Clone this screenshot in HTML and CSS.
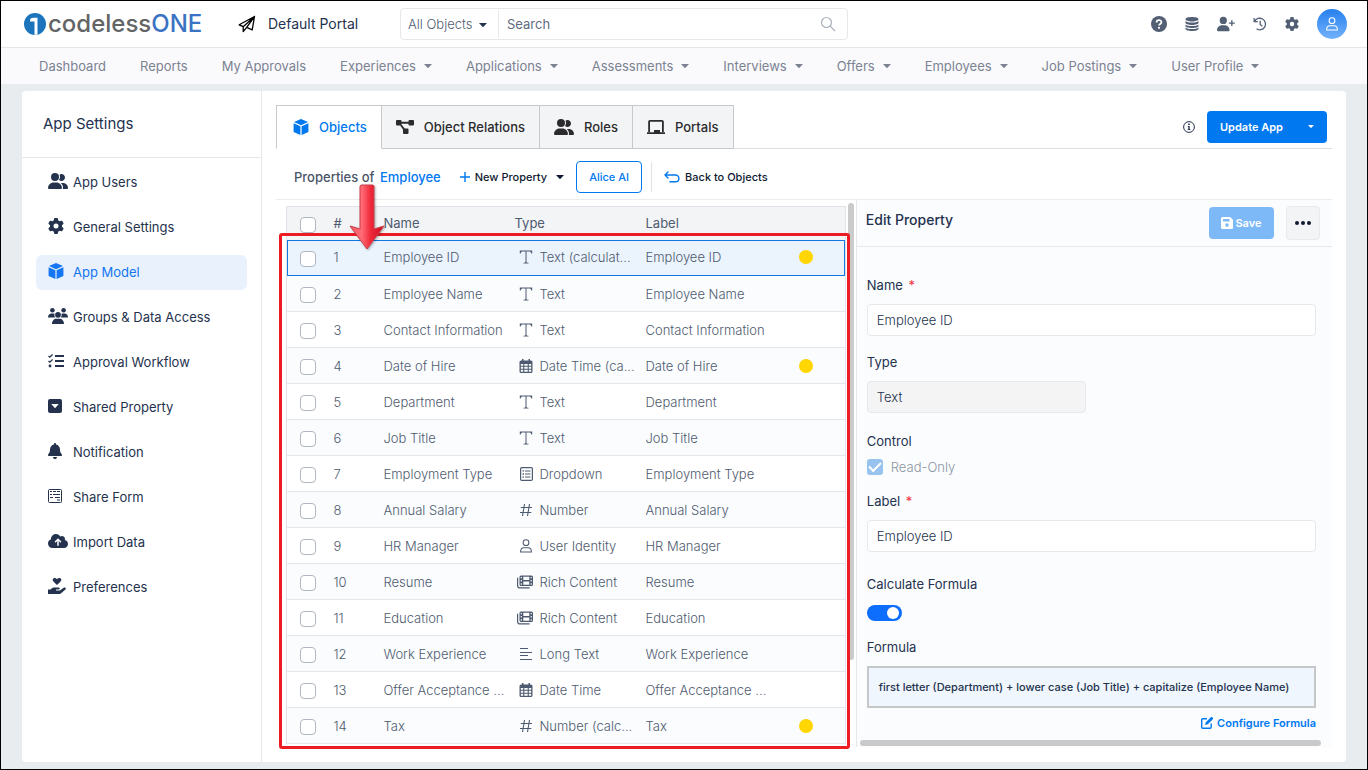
FILE: index.html
```html
<!DOCTYPE html>
<html lang="en">
<head>
    <meta charset="UTF-8">
    <meta name="viewport" content="width=device-width, initial-scale=1.0">
    <title>App Settings - codelessONE</title>
    <link rel="stylesheet" href="styles.css">
</head>
<body>
    <!-- Icon set -->
    <svg class="sprite" aria-hidden="true">
        <symbol id="i-users" viewBox="0 0 640 512"><path d="M96 128a128 128 0 1 1 256 0A128 128 0 1 1 96 128zM0 482.3C0 383.8 79.8 304 178.3 304h91.4C368.2 304 448 383.8 448 482.3c0 16.4-13.3 29.7-29.7 29.7H29.7C13.3 512 0 498.7 0 482.3zM609.3 512H471.4c5.4-9.4 8.6-20.3 8.6-32v-8c0-60.7-27.1-115.2-69.8-151.8c2.4-.1 4.7-.2 7.1-.2h61.4C567.8 320 640 392.2 640 481.3c0 17-13.8 30.7-30.7 30.7zM432 256c-31 0-59-12.6-79.3-32.9C372.4 196.5 384 163.6 384 128c0-26.8-6.6-52.1-18.3-74.3C384.3 40.1 407.2 32 432 32c61.9 0 112 50.1 112 112s-50.1 112-112 112z"/></symbol>
        <symbol id="i-gear" viewBox="0 0 512 512"><path d="M495.9 166.6c3.2 8.7 .5 18.4-6.4 24.6l-43.3 39.4c1.1 8.3 1.7 16.8 1.7 25.4s-.6 17.1-1.7 25.4l43.3 39.4c6.9 6.2 9.6 15.9 6.4 24.6c-4.4 11.9-9.7 23.3-15.8 34.3l-4.7 8.1c-6.6 11-14 21.4-22.1 31.2c-5.9 7.2-15.7 9.6-24.5 6.8l-55.7-17.7c-13.4 10.3-28.2 18.9-44 25.4l-12.5 57.1c-2 9.1-9 16.3-18.2 17.8c-13.8 2.3-28 3.5-42.5 3.5s-28.7-1.2-42.5-3.5c-9.2-1.5-16.2-8.7-18.2-17.8l-12.5-57.1c-15.8-6.5-30.6-15.1-44-25.4L83.1 425.9c-8.8 2.8-18.6 .3-24.5-6.8c-8.1-9.8-15.5-20.2-22.1-31.2l-4.7-8.1c-6.1-11-11.4-22.4-15.8-34.3c-3.2-8.7-.5-18.4 6.4-24.6l43.3-39.4C64.6 273.1 64 264.6 64 256s.6-17.1 1.7-25.4L22.4 191.2c-6.9-6.2-9.6-15.9-6.4-24.6c4.4-11.9 9.7-23.3 15.8-34.3l4.7-8.1c6.6-11 14-21.4 22.1-31.2c5.9-7.2 15.7-9.6 24.5-6.8l55.7 17.7c13.4-10.3 28.2-18.9 44-25.4l12.5-57.1c2-9.1 9-16.3 18.2-17.8C227.3 1.2 241.5 0 256 0s28.7 1.2 42.5 3.5c9.2 1.5 16.2 8.7 18.2 17.8l12.5 57.1c15.8 6.5 30.6 15.1 44 25.4l55.7-17.7c8.8-2.8 18.6-.3 24.5 6.8c8.1 9.8 15.5 20.2 22.1 31.2l4.7 8.1c6.1 11 11.4 22.4 15.8 34.3zM256 336a80 80 0 1 0 0-160 80 80 0 1 0 0 160z"/></symbol>
        <symbol id="i-cube" viewBox="0 0 16 16"><path d="M8 0 15 3 8 6.2 1 3zM.6 4.2l6.8 3V16L.6 13zM15.4 4.2l-6.8 3V16l6.8-3z"/></symbol>
        <symbol id="i-groups" viewBox="0 0 20 16"><circle cx="4.4" cy="2.3" r="2.3"/><circle cx="15.6" cy="2.3" r="2.3"/><circle cx="10" cy="6.8" r="2.9"/><path d="M0 9.3C0 7 1.6 5.5 3.6 5.5h1.6c.5 0 1 .1 1.4.3C6 7.3 6.5 8.6 7.3 9.500H.2zM20 9.300c0-2.300-1.600-3.800-3.600-3.800h-1.600c-.5 0-1 .1-1.400.3.600 1.500.1 2.800-.7 3.700h7.100zM4 16c0-3.200 2-5.200 4.500-5.200h3c2.500 0 4.500 2 4.500 5.200z"/></symbol>
        <symbol id="i-checklist" viewBox="0 0 16 16"><path fill="none" stroke="currentColor" stroke-width="1.300" d="M.5 3l1.300 1.200L4.600 1.500M.5 8l1.300 1.200 2.800-2.700"/><path d="M7 2h9v2H7zM7 7h9v2H7zM7 12h9v2H7z"/><circle cx="2" cy="13" r="1.400"/></symbol>
        <symbol id="i-caret-square" viewBox="0 0 14 14"><path fill-rule="evenodd" d="M2 0h10a2 2 0 0 1 2 2v10a2 2 0 0 1-2 2H2a2 2 0 0 1-2-2V2a2 2 0 0 1 2-2zM3.200 5 7 9.300 10.800 5z"/></symbol>
        <symbol id="i-bell" viewBox="0 0 448 512"><path d="M224 0c-17.7 0-32 14.3-32 32V51.2C119 66 64 130.6 64 208v18.8c0 47-17.3 92.4-48.5 127.6l-7.4 8.3c-8.4 9.4-10.4 22.9-5.3 34.4S19.4 416 32 416H416c12.6 0 24-7.4 29.2-18.9s3.1-25-5.3-34.4l-7.4-8.3C401.3 319.2 384 273.900 384 226.800V208c0-77.400-55-142-128-156.800V32c0-17.700-14.300-32-32-32zm45.300 493.300c12-12 18.700-28.300 18.700-45.300H160c0 17 6.700 33.300 18.700 45.300s28.300 18.700 45.300 18.700s33.300-6.700 45.300-18.700z"/></symbol>
        <symbol id="i-form" viewBox="0 0 14 14"><g fill="none" stroke="currentColor"><rect x=".5" y=".5" width="13" height="13" rx="1"/><path d="M2 2.500h2m1 0h3m1 0h3M2 5.500h2m1 0h7M2 8.500h3m2 0h5M9 11h3"/></g></symbol>
        <symbol id="i-cloud" viewBox="0 0 640 512"><path d="M144 480C64.5 480 0 415.5 0 336c0-62.8 40.2-116.2 96.2-135.9c-.1-2.7-.2-5.4-.2-8.1c0-88.4 71.6-160 160-160c59.3 0 111 32.2 138.7 80.2C409.9 102 428.3 96 448 96c53 0 96 43 96 96c0 12.2-2.3 23.8-6.4 34.6C596 238.400 640 290.100 640 352c0 70.700-57.300 128-128 128H144zm79-217c-9.400 9.400-9.400 24.600 0 33.900s24.600 9.400 33.900 0l39-39V392c0 13.300 10.700 24 24 24s24-10.700 24-24V257.900l39 39c9.400 9.400 24.600 9.400 33.900 0s9.400-24.600 0-33.900l-80-80c-9.400-9.400-24.600-9.400-33.900 0l-80 80z"/></symbol>
        <symbol id="i-hand" viewBox="0 0 18 16"><path d="M9 7 5.400 3.500C4 2 4.800 0 6.600 0 7.700 0 8.500.6 9 1.300 9.500.6 10.300 0 11.400 0c1.800 0 2.600 2 1.200 3.500zM0 11.500h2.500C4 10 5 9.600 6.500 9.600h4.200c1.300 0 1.300 1.900 0 1.900H8v.9h3.800l3.900-2.700c1.400-.8 2.900.8 1.700 1.900l-4 3.300c-.7.600-1.400 1.100-2.400 1.100H0z"/></symbol>
        <symbol id="i-plane" viewBox="0 0 18 18"><path fill="none" stroke="currentColor" stroke-width="1.300" stroke-linejoin="round" d="M16.500 1.500 1.200 9.800l4 1.900zM16.500 1.500 14.200 14.800l-5.500-2.400zM5.200 11.700v4.800l3.500-4.100"/></symbol>
        <symbol id="i-search" viewBox="0 0 16 16"><path fill="none" stroke="currentColor" stroke-width="1.200" d="M11.500 6.500a5 5 0 1 1-10 0 5 5 0 0 1 10 0zM10.200 10.200 15 15"/></symbol>
        <symbol id="i-help" viewBox="0 0 16 16"><circle cx="8" cy="8" r="8"/><path fill="none" stroke="#fff" stroke-width="1.800" d="M5.600 6.400c0-3 4.800-3 4.800-.2C10.400 8 8 7.800 8 9.600"/><circle cx="8" cy="11.800" r="1.100" fill="#fff"/></symbol>
        <symbol id="i-database" viewBox="0 0 14 14"><path d="M.5 2.200C.5.800 3.400 0 7 0s6.500.8 6.500 2.200S10.600 4.400 7 4.400.5 3.600.5 2.200zM.5 4c1 1.100 3.800 1.500 6.500 1.500S12.500 5.100 13.500 4v1.800C13.500 7.100 10.600 8 7 8S.5 7.100.5 5.800zM.5 7.400C1.500 8.500 4.300 9 7 9s5.500-.5 6.500-1.600v1.700c0 1.300-2.900 2-6.500 2s-6.500-.7-6.500-2zM.5 10.600c1 1.100 3.800 1.500 6.500 1.500s5.500-.4 6.500-1.500v1.200C13.500 13.200 10.600 14 7 14s-6.500-.8-6.500-2.200z"/></symbol>
        <symbol id="i-user-plus" viewBox="0 0 640 512"><path d="M96 128a128 128 0 1 1 256 0A128 128 0 1 1 96 128zM0 482.300C0 383.800 79.800 304 178.300 304h91.400C368.200 304 448 383.800 448 482.300c0 16.400-13.300 29.700-29.700 29.700H29.700C13.300 512 0 498.700 0 482.300zM504 312V248H440c-13.300 0-24-10.700-24-24s10.700-24 24-24h64V136c0-13.300 10.700-24 24-24s24 10.700 24 24v64h64c13.300 0 24 10.700 24 24s-10.700 24-24 24H552v64c0 13.300-10.700 24-24 24s-24-10.700-24-24z"/></symbol>
        <symbol id="i-history" viewBox="0 0 16 16"><path fill="none" stroke="currentColor" stroke-width="1.500" d="M1.300 1v4.200h4.200M1.800 5A6.600 6.600 0 1 1 4 13.500M8.200 4.400V8.500l2.600 2"/></symbol>
        <symbol id="i-person" viewBox="0 0 14 16"><path fill="none" stroke="currentColor" stroke-width="1.200" stroke-linejoin="round" d="M10.300 4.200a3.300 3.300 0 1 1-6.600 0 3.300 3.300 0 0 1 6.600 0zM.8 14.800c0-3 1.700-4.800 3.700-4.800h5c2 0 3.700 1.800 3.700 4.800z"/></symbol>
        <symbol id="i-relations" viewBox="0 0 18 14"><path d="M1 0h3.500a1 1 0 0 1 1 1v.8h7V1a1 1 0 0 1 1-1H17a1 1 0 0 1 1 1v3.500a1 1 0 0 1-1 1h-3.500a1 1 0 0 1-1-1v-.7h-7v.6L8.700 8.500H11.500a1 1 0 0 1 1 1V13a1 1 0 0 1-1 1H8a1 1 0 0 1-1-1V9.500L4.200 5.500H1a1 1 0 0 1-1-1V1a1 1 0 0 1 1-1z"/></symbol>
        <symbol id="i-portal" viewBox="0 0 18 14"><path d="M1.200 12V1.800C1.200.8 2 0 3 0h12c1 0 1.800.8 1.800 1.800V12H15V1.800H3V12zM0 12.200h18V14H0zM7 10h6v2.500H7z"/></symbol>
        <symbol id="i-info" viewBox="0 0 12 12"><circle cx="6" cy="6" r="5.400" fill="none" stroke="currentColor"/><path d="M5.200 2.600h1.500V4H5.200zM4.700 5h2v3.200h.7V9H4.600v-.8h.7V5.800h-.6z"/></symbol>
        <symbol id="i-plus" viewBox="0 0 10 10"><path d="M4.300 0h1.400v4.300H10v1.400H5.700V10H4.300V5.700H0V4.300h4.300z"/></symbol>
        <symbol id="i-back" viewBox="0 0 16 12"><path fill="none" stroke="currentColor" stroke-width="1.400" stroke-linecap="round" stroke-linejoin="round" d="M4 1 1 4l3 3M1 4h10.500a3.400 3.400 0 0 1 0 6.800H6"/></symbol>
        <symbol id="i-caret" viewBox="0 0 10 5"><path d="M0 0h10L5.600 4.700a.8.8 0 0 1-1.200 0z"/></symbol>
        <symbol id="i-text" viewBox="0 0 14 14"><path d="M.8.600h12.400v3h-1C12.100 2 11.500 1.500 10 1.500H7.500v10c0 1 .4 1.200 2 1.300v.7h-5v-.7c1.600-.1 2-.3 2-1.300v-10H4c-1.500 0-2.100.5-2.200 2.100h-1z"/></symbol>
        <symbol id="i-calendar" viewBox="0 0 14 14"><path fill-rule="evenodd" d="M3 0h1.500v1.500h5V0H11v1.500h1a1.500 1.500 0 0 1 1.500 1.500v9.500A1.500 1.500 0 0 1 12 14H2a1.500 1.500 0 0 1-1.500-1.500V3A1.500 1.500 0 0 1 2 1.500h1zM1.800 5v1.700h2.400V5zM5.300 5v1.700h3.400V5zM9.800 5v1.700h2.400V5zM1.800 7.800v1.900h2.400V7.800zM5.300 7.800v1.900h3.400V7.800zM9.800 7.800v1.900h2.400V7.800zM1.800 10.800v2h2.400v-2zM5.300 10.800v2h3.400v-2zM9.800 10.800v2h2.400v-2z"/></symbol>
        <symbol id="i-dropdown" viewBox="0 0 14 14"><rect x="1.600" y=".6" width="11.800" height="12.800" rx="1.200" fill="none" stroke="currentColor" stroke-width="1.200"/><path d="M3.500 3.200H5v1.400H3.500zM6 3.400h5.500v1H6zM3.500 6.300H5v1.400H3.500zM6 6.500h5.500v1H6zM3.500 9.400H5v1.400H3.500zM6 9.600h5.500v1H6z"/></symbol>
        <symbol id="i-hash" viewBox="0 0 14 14"><path fill="none" stroke="currentColor" stroke-width="1.100" d="M5.500 1 3.500 13M10.500 1l-2 12M1.700 4.500H13M1 9.500h11.300"/></symbol>
        <symbol id="i-media" viewBox="0 0 16 14"><path fill="none" stroke="currentColor" stroke-width="1.200" d="M.6 2.800v7.600c0 1.600.8 2.500 2.400 2.500h9.600"/><path fill-rule="evenodd" d="M4 .5h10.500A1.500 1.500 0 0 1 16 2v7.500a1.500 1.500 0 0 1-1.500 1.500H4a1.500 1.500 0 0 1-1.500-1.500V2A1.500 1.500 0 0 1 4 .5zM3.700 1.900v1.400h1.200V1.900zM3.700 5v1.500h1.200V5zM3.700 8.200v1.500h1.200V8.200zM6.300 1.800v3.300h6V1.800zM6.300 6.400v3.300h6V6.400zM13.600 1.900v1.400h1.200V1.900zM13.600 5v1.500h1.200V5zM13.600 8.200v1.500h1.200V8.200z"/></symbol>
        <symbol id="i-lines" viewBox="0 0 14 14"><path d="M1 1h8v1H1zM1 5h12v1H1zM1 8h8v1H1zM1 12h12v1H1z"/></symbol>
        <symbol id="i-save" viewBox="0 0 12 12"><path fill-rule="evenodd" d="M1.500 0h7.700L12 2.800v7.700a1.500 1.500 0 0 1-1.500 1.500h-9A1.500 1.500 0 0 1 0 10.500v-9A1.500 1.500 0 0 1 1.500 0zM2 2v2.500h6.500V2zM6 6.300a1.800 1.800 0 1 0 0 3.600 1.800 1.800 0 0 0 0-3.600z"/></symbol>
        <symbol id="i-edit" viewBox="0 0 12 12"><path fill="none" stroke="currentColor" stroke-width="1.400" d="M6 1.800H1.700a1 1 0 0 0-1 1v7.500a1 1 0 0 0 1 1h7.500a1 1 0 0 0 1-1V6.500"/><path d="M9.600.4a1.200 1.200 0 0 1 2 2L6.800 7.200l-2.700.8.700-2.800z"/></symbol>
    </svg>

    <header class="topbar">
        <a class="logo" href="#">
            <svg class="logo-mark" viewBox="0 0 22 22"><circle cx="11" cy="11" r="11" fill="#1c75bc"/><path fill="#fff" d="M6 7.500C6 5.500 7.500 4.800 9.500 4.800h4V21.600l-3 .4V8.600H6z"/></svg>
            <span class="logo-text">codeless<span class="logo-one">ONE</span></span>
        </a>
        <a class="portal" href="#">
            <svg class="icon-18"><use href="#i-plane"/></svg>
            <span>Default Portal</span>
        </a>
        <form class="search">
            <div class="search-scope">
                <select aria-label="Object">
                    <option>All Objects</option>
                </select>
                <svg class="caret"><use href="#i-caret"/></svg>
            </div>
            <input type="text" placeholder="Search" aria-label="Search">
            <button type="submit" aria-label="Search"><svg class="icon-16"><use href="#i-search"/></svg></button>
        </form>
        <div class="top-actions">
            <button aria-label="Help"><svg class="icon-16"><use href="#i-help"/></svg></button>
            <button aria-label="Data"><svg class="icon-14"><use href="#i-database"/></svg></button>
            <button aria-label="Invite user"><svg class="icon-18"><use href="#i-user-plus"/></svg></button>
            <button aria-label="History"><svg class="icon-14"><use href="#i-history"/></svg></button>
            <button aria-label="Settings"><svg class="icon-14"><use href="#i-gear"/></svg></button>
            <button class="avatar" aria-label="Account"><svg class="icon-14"><use href="#i-person"/></svg></button>
        </div>
    </header>

    <nav class="mainnav">
        <a href="#">Dashboard</a>
        <a href="#">Reports</a>
        <a href="#">My Approvals</a>
        <a href="#">Experiences <svg class="caret"><use href="#i-caret"/></svg></a>
        <a href="#">Applications <svg class="caret"><use href="#i-caret"/></svg></a>
        <a href="#">Assessments <svg class="caret"><use href="#i-caret"/></svg></a>
        <a href="#">Interviews <svg class="caret"><use href="#i-caret"/></svg></a>
        <a href="#">Offers <svg class="caret"><use href="#i-caret"/></svg></a>
        <a href="#">Employees <svg class="caret"><use href="#i-caret"/></svg></a>
        <a href="#">Job Postings <svg class="caret"><use href="#i-caret"/></svg></a>
        <a href="#">User Profile <svg class="caret"><use href="#i-caret"/></svg></a>
    </nav>

    <div class="page">
        <aside class="sidebar">
            <h1>App Settings</h1>
            <nav class="menu">
                <a href="#"><span class="menu-icon"><svg class="icon-20"><use href="#i-users"/></svg></span>App Users</a>
                <a href="#"><span class="menu-icon"><svg class="icon-16"><use href="#i-gear"/></svg></span>General Settings</a>
                <a href="#" class="active"><span class="menu-icon"><svg class="icon-16"><use href="#i-cube"/></svg></span>App Model</a>
                <a href="#"><span class="menu-icon"><svg class="icon-20"><use href="#i-groups"/></svg></span>Groups &amp; Data Access</a>
                <a href="#"><span class="menu-icon"><svg class="icon-16"><use href="#i-checklist"/></svg></span>Approval Workflow</a>
                <a href="#"><span class="menu-icon"><svg class="icon-14"><use href="#i-caret-square"/></svg></span>Shared Property</a>
                <a href="#"><span class="menu-icon"><svg class="icon-bell"><use href="#i-bell"/></svg></span>Notification</a>
                <a href="#"><span class="menu-icon"><svg class="icon-14"><use href="#i-form"/></svg></span>Share Form</a>
                <a href="#"><span class="menu-icon"><svg class="icon-20"><use href="#i-cloud"/></svg></span>Import Data</a>
                <a href="#"><span class="menu-icon"><svg class="icon-18"><use href="#i-hand"/></svg></span>Preferences</a>
            </nav>
        </aside>

        <main class="content">
            <div class="tabs-row">
                <div class="tabs">
                    <a href="#" class="tab active"><svg class="icon-16"><use href="#i-cube"/></svg>Objects</a>
                    <a href="#" class="tab"><svg class="icon-18"><use href="#i-relations"/></svg>Object Relations</a>
                    <a href="#" class="tab"><svg class="icon-20"><use href="#i-users"/></svg>Roles</a>
                    <a href="#" class="tab"><svg class="icon-18"><use href="#i-portal"/></svg>Portals</a>
                </div>
                <div class="update">
                    <svg class="icon-12"><use href="#i-info"/></svg>
                    <button class="btn-update">Update App <svg class="caret-small"><use href="#i-caret"/></svg></button>
                </div>
            </div>

            <div class="toolbar">
                <h2>Properties of <a href="#">Employee</a></h2>
                <button class="btn-new"><svg class="icon-plus"><use href="#i-plus"/></svg>New Property <svg class="caret"><use href="#i-caret"/></svg></button>
                <button class="btn-outline">Alice AI</button>
                <a class="back" href="#"><svg class="icon-16"><use href="#i-back"/></svg>Back to Objects</a>
            </div>

            <div class="split">
                <section class="list">
                    <div class="table-wrap">
                        <table class="props">
                            <colgroup>
                                <col class="c-check"><col class="c-num"><col class="c-name"><col class="c-type"><col><col class="c-dot">
                            </colgroup>
                            <thead>
                                <tr>
                                    <th><input type="checkbox" aria-label="Select all"></th>
                                    <th>#</th>
                                    <th>Name</th>
                                    <th>Type</th>
                                    <th>Label</th>
                                    <th></th>
                                </tr>
                            </thead>
                            <tbody>
                                <tr class="selected">
                                    <td><input type="checkbox" aria-label="Select Employee ID"></td>
                                    <td>1</td><td>Employee ID</td>
                                    <td><span class="type"><svg><use href="#i-text"/></svg>Text (calculat...</span></td>
                                    <td>Employee ID</td><td><span class="dot"></span></td>
                                </tr>
                                <tr>
                                    <td><input type="checkbox" aria-label="Select Employee Name"></td>
                                    <td>2</td><td>Employee Name</td>
                                    <td><span class="type"><svg><use href="#i-text"/></svg>Text</span></td>
                                    <td>Employee Name</td><td></td>
                                </tr>
                                <tr>
                                    <td><input type="checkbox" aria-label="Select Contact Information"></td>
                                    <td>3</td><td>Contact Information</td>
                                    <td><span class="type"><svg><use href="#i-text"/></svg>Text</span></td>
                                    <td>Contact Information</td><td></td>
                                </tr>
                                <tr>
                                    <td><input type="checkbox" aria-label="Select Date of Hire"></td>
                                    <td>4</td><td>Date of Hire</td>
                                    <td><span class="type"><svg><use href="#i-calendar"/></svg>Date Time (ca...</span></td>
                                    <td>Date of Hire</td><td><span class="dot"></span></td>
                                </tr>
                                <tr>
                                    <td><input type="checkbox" aria-label="Select Department"></td>
                                    <td>5</td><td>Department</td>
                                    <td><span class="type"><svg><use href="#i-text"/></svg>Text</span></td>
                                    <td>Department</td><td></td>
                                </tr>
                                <tr>
                                    <td><input type="checkbox" aria-label="Select Job Title"></td>
                                    <td>6</td><td>Job Title</td>
                                    <td><span class="type"><svg><use href="#i-text"/></svg>Text</span></td>
                                    <td>Job Title</td><td></td>
                                </tr>
                                <tr>
                                    <td><input type="checkbox" aria-label="Select Employment Type"></td>
                                    <td>7</td><td>Employment Type</td>
                                    <td><span class="type"><svg><use href="#i-dropdown"/></svg>Dropdown</span></td>
                                    <td>Employment Type</td><td></td>
                                </tr>
                                <tr>
                                    <td><input type="checkbox" aria-label="Select Annual Salary"></td>
                                    <td>8</td><td>Annual Salary</td>
                                    <td><span class="type"><svg><use href="#i-hash"/></svg>Number</span></td>
                                    <td>Annual Salary</td><td></td>
                                </tr>
                                <tr>
                                    <td><input type="checkbox" aria-label="Select HR Manager"></td>
                                    <td>9</td><td>HR Manager</td>
                                    <td><span class="type"><svg><use href="#i-person"/></svg>User Identity</span></td>
                                    <td>HR Manager</td><td></td>
                                </tr>
                                <tr>
                                    <td><input type="checkbox" aria-label="Select Resume"></td>
                                    <td>10</td><td>Resume</td>
                                    <td><span class="type"><svg class="wide"><use href="#i-media"/></svg>Rich Content</span></td>
                                    <td>Resume</td><td></td>
                                </tr>
                                <tr>
                                    <td><input type="checkbox" aria-label="Select Education"></td>
                                    <td>11</td><td>Education</td>
                                    <td><span class="type"><svg class="wide"><use href="#i-media"/></svg>Rich Content</span></td>
                                    <td>Education</td><td></td>
                                </tr>
                                <tr>
                                    <td><input type="checkbox" aria-label="Select Work Experience"></td>
                                    <td>12</td><td>Work Experience</td>
                                    <td><span class="type"><svg><use href="#i-lines"/></svg>Long Text</span></td>
                                    <td>Work Experience</td><td></td>
                                </tr>
                                <tr>
                                    <td><input type="checkbox" aria-label="Select Offer Acceptance"></td>
                                    <td>13</td><td>Offer Acceptance ...</td>
                                    <td><span class="type"><svg><use href="#i-calendar"/></svg>Date Time</span></td>
                                    <td>Offer Acceptance ...</td><td></td>
                                </tr>
                                <tr>
                                    <td><input type="checkbox" aria-label="Select Tax"></td>
                                    <td>14</td><td>Tax</td>
                                    <td><span class="type"><svg><use href="#i-hash"/></svg>Number (calc...</span></td>
                                    <td>Tax</td><td><span class="dot"></span></td>
                                </tr>
                            </tbody>
                        </table>
                        <!-- Callout over the property rows -->
                        <div class="callout"></div>
                        <svg class="callout-arrow" viewBox="0 0 36 66">
                            <defs>
                                <linearGradient id="arrow-fill" x1="0" x2="1">
                                    <stop offset="0" stop-color="#ff5a66"/>
                                    <stop offset=".35" stop-color="#ff6b75"/>
                                    <stop offset=".6" stop-color="#f02a3b"/>
                                    <stop offset="1" stop-color="#c90a1c"/>
                                </linearGradient>
                            </defs>
                            <path fill="url(#arrow-fill)" stroke="#c8404c" d="M12 1h12l1 1v43l10-3L18 65 1 42l10 3V2z"/>
                        </svg>
                    </div>
                    <div class="vscroll"></div>
                </section>

                <section class="editor">
                    <div class="editor-head">
                        <h3>Edit Property</h3>
                        <button class="btn-save" disabled><svg class="icon-12"><use href="#i-save"/></svg>Save</button>
                        <button class="btn-more" aria-label="More"><span></span><span></span><span></span></button>
                    </div>
                    <form class="editor-body">
                        <div class="field">
                            <label for="name">Name <span class="req">*</span></label>
                            <input type="text" id="name" value="Employee ID">
                        </div>
                        <div class="field">
                            <label for="type">Type</label>
                            <input type="text" id="type" value="Text" readonly>
                        </div>
                        <div class="field field-check">
                            <span class="label">Control</span>
                            <div class="check">
                                <input type="checkbox" id="readonly" checked disabled>
                                <label for="readonly">Read-Only</label>
                            </div>
                        </div>
                        <div class="field">
                            <label for="label">Label <span class="req">*</span></label>
                            <input type="text" id="label" value="Employee ID">
                        </div>
                        <div class="field field-switch">
                            <label for="calc">Calculate Formula</label>
                            <input type="checkbox" id="calc" class="switch" checked>
                        </div>
                        <div class="field">
                            <span class="label">Formula</span>
                            <div class="formula">first letter (Department) + lower case (Job Title) + capitalize (Employee Name)</div>
                            <a class="configure" href="#"><svg class="icon-12"><use href="#i-edit"/></svg>Configure Formula</a>
                        </div>
                    </form>
                    <div class="hscroll"></div>
                </section>
            </div>
        </main>
    </div>
</body>
</html>
```
FILE: styles.css
```css
* {
    box-sizing: border-box;
}

body {
    margin: 0;
    min-height: 100vh;
    display: flex;
    flex-direction: column;
    border: 1px solid #000;
    background-color: #e8ecef;
    color: #24324e;
    font-family: Inter, "Liberation Sans", sans-serif;
    font-size: 13px;
    line-height: 20px;
}

a {
    color: inherit;
    text-decoration: none;
}

button,
input,
select {
    font: inherit;
    color: inherit;
}

button {
    padding: 0;
    border: none;
    background: none;
    cursor: pointer;
}

svg {
    display: block;
    flex: none;
    fill: currentColor;
}

.sprite {
    position: absolute;
    width: 0;
    height: 0;
}

.icon-12 { width: 12px; height: 12px; }
.icon-14 { width: 14px; height: 14px; }
.icon-16 { width: 16px; height: 16px; }
.icon-18 { width: 18px; height: 18px; }
.icon-20 { width: 20px; height: 16px; }
.icon-bell { width: 14px; height: 16px; }
.icon-plus { width: 10px; height: 10px; }
.caret { width: 8px; height: 4px; }
.caret-small { width: 6px; height: 3px; }

/* Top bar */
.topbar {
    height: 47px;
    display: flex;
    align-items: center;
    padding: 0 20px 0 23px;
    background-color: #fff;
    border-bottom: 1px solid #e6e6ea;
}

.logo {
    display: flex;
    align-items: center;
    gap: 2px;
    width: 214px;
}

.logo-mark {
    width: 22px;
    height: 22px;
}

.logo-text {
    font-size: 24px;
    font-weight: 500;
    color: #636466;
}

.logo-one {
    color: #3b73c4;
}

.portal {
    display: flex;
    align-items: center;
    gap: 12px;
    width: 162px;
    font-size: 14px;
}

.portal svg {
    color: #000;
}

.search {
    display: flex;
    align-items: center;
    flex: 0 1 448px;
    height: 32px;
    padding: 2px 0;
    border: 1px solid #e6e8ec;
    border-radius: 4px;
    color: #4f5b70;
}

.search-scope {
    position: relative;
    width: 98px;
    border-right: 1px solid #e6e8ec;
}

.search-scope select {
    width: 100%;
    height: 26px;
    padding: 0 7px;
    border: none;
    background: none;
    font-weight: 300;
    appearance: none;
}

.search-scope .caret {
    position: absolute;
    top: 12px;
    right: 11px;
    color: #24324e;
    pointer-events: none;
}

.search input {
    flex: 1;
    min-width: 0;
    padding: 0 8px;
    border: none;
    background: none;
    outline: none;
}

.search input::placeholder {
    color: #5f6b7e;
}

.search button {
    padding-right: 11px;
    color: #a9b0ba;
}

.top-actions {
    display: flex;
    align-items: center;
    gap: 18px;
    margin-left: auto;
    color: #525f75;
}

.avatar {
    display: grid;
    place-items: center;
    width: 30px;
    height: 30px;
    border-radius: 50%;
    background: linear-gradient(#2680ee, #72b1fb);
    color: #fff;
}

/* Main navigation */
.mainnav {
    display: flex;
    align-items: center;
    gap: 34px;
    height: 36px;
    padding: 0 38px;
    background-color: #fafafd;
    color: #7b8291;
    white-space: nowrap;
}

.mainnav a {
    display: flex;
    align-items: center;
    gap: 8px;
}

/* Page card */
.page {
    flex: 1;
    display: flex;
    margin: 7px 21px;
    background-color: #fff;
    border-radius: 4px;
}

.sidebar {
    flex: 0 0 240px;
    border-right: 1px solid #e6e8ec;
}

.sidebar h1 {
    margin: 0;
    padding: 23px 21px;
    border-bottom: 1px solid #e6e8ec;
    font-size: 15px;
    font-weight: 400;
}

.menu {
    display: flex;
    flex-direction: column;
    gap: 10px;
    padding: 7px 14px;
}

.menu a {
    display: flex;
    align-items: center;
    height: 35px;
    padding: 0 12px 2px;
    border-radius: 6px;
}

.menu .active {
    background-color: #e8f1fc;
    color: #1476f2;
}

.menu-icon {
    width: 25px;
    padding-bottom: 2px;
}

.content {
    flex: 1;
    min-width: 0;
    padding: 14px;
}

/* Tabs */
.tabs-row {
    display: flex;
    justify-content: space-between;
    border-bottom: 1px solid #dcdfe4;
}

.tabs {
    display: flex;
    margin-bottom: -1px;
}

.tab {
    display: flex;
    align-items: center;
    gap: 10px;
    height: 44px;
    padding: 0 14px;
    border: 1px solid #c8c9cb;
    border-left: none;
    background-color: #f3f4f6;
    color: #2b2b2e;
    font-weight: 500;
}

.tab.active {
    padding-left: 16px;
    border-left: 1px solid #c8c9cb;
    border-bottom-color: #fff;
    background-color: #fff;
    color: #0078f0;
}

.update {
    display: flex;
    align-items: center;
    gap: 12px;
    padding-right: 5px;
}

.btn-update {
    display: flex;
    align-items: center;
    justify-content: space-between;
    width: 120px;
    height: 32px;
    padding: 0 13px;
    border-radius: 4px;
    background-color: #0078f0;
    color: #fff;
    font-size: 11px;
    font-weight: 600;
}

/* Toolbar */
.toolbar {
    display: flex;
    align-items: center;
    height: 51px;
    padding: 6px 18px 0;
    border-bottom: 1px solid #ebecee;
    font-size: 11px;
    font-weight: 500;
    color: #101a30;
}

.toolbar h2 {
    margin: 0 19px 0 0;
    font-size: 13px;
    font-weight: 500;
    color: #4a5568;
}

.toolbar h2 a {
    margin-left: 2px;
    color: #0078f0;
}

.btn-new {
    display: flex;
    align-items: center;
    gap: 5px;
    margin-right: 12px;
}

.btn-new .caret {
    margin-left: 4px;
}

.icon-plus,
.back svg {
    color: #0078f0;
}

.btn-outline {
    height: 32px;
    padding: 0 12px;
    border: 1px solid #0078f0;
    border-radius: 4px;
    color: #0078f0;
}

.back {
    display: flex;
    align-items: center;
    gap: 5px;
    height: 30px;
    margin-left: 9px;
    padding-left: 12px;
    border-left: 1px solid #dfe2e6;
}

/* List and editor */
.split {
    display: flex;
}

.list {
    flex: 0 0 55%;
    display: flex;
    padding: 3px 2px 0 10px;
    border-right: 1px solid #e6e8ec;
}

.table-wrap {
    position: relative;
    flex: 1;
    padding: 3px 0;
}

.props {
    width: 100%;
    border: 1px solid #e0e3e7;
    border-collapse: collapse;
    table-layout: fixed;
    color: #4f5b70;
    white-space: nowrap;
}

.c-check { width: 47px; }
.c-num { width: 50px; }
.c-name { width: 131px; }
.c-type { width: 131px; }
.c-dot { width: 46px; }

.props th {
    height: 33px;
    padding: 0;
    background-color: #f3f4f6;
    font-weight: 400;
    text-align: left;
}

.props td {
    height: 36px;
    padding: 0;
    border-bottom: 1px solid #e3e6ea;
    font-weight: 300;
}

.props th:first-child,
.props td:first-child {
    padding: 3px 0 0 13px;
}

.props tbody tr:nth-child(even) {
    background-color: #fafcfe;
}

.props .selected {
    background-color: #ebf3fd;
    outline: 1px solid #1476e0;
    outline-offset: -1px;
}

.props input {
    display: block;
    width: 16px;
    height: 16px;
    margin: 0;
    border: 1px solid #b0b7c1;
    border-radius: 4px;
    background-color: #fff;
    appearance: none;
}

.type {
    display: flex;
    align-items: center;
    gap: 7px;
}

.type svg {
    width: 14px;
    height: 14px;
    margin-left: 4px;
}

.type .wide {
    width: 16px;
    margin-left: 2px;
}

.dot {
    display: block;
    width: 14px;
    height: 14px;
    border-radius: 50%;
    background-color: #ffd600;
}

.callout {
    position: absolute;
    top: 30px;
    right: -4px;
    bottom: -2px;
    left: -7px;
    border: 3px solid #ed1c24;
    border-radius: 3px;
    pointer-events: none;
}

.callout-arrow {
    position: absolute;
    top: -19px;
    left: 63px;
    width: 36px;
    height: 66px;
    filter: drop-shadow(1px 1px 1px rgba(0,0,0,0.3));
}

.vscroll {
    width: 6px;
    height: 457px;
    margin-left: 2px;
    border-radius: 3px;
    background-color: #cbcbcb;
}

.editor {
    flex: 1;
    min-width: 0;
    background-color: #fafcfe;
}

.editor-head {
    display: flex;
    align-items: center;
    height: 47px;
    padding: 0 12px 0 9px;
    border-bottom: 1px solid #e6e8ec;
}

.editor-head h3 {
    margin: 0 auto 6px 0;
    font-size: 14px;
    font-weight: 500;
}

.btn-save {
    display: flex;
    align-items: center;
    justify-content: center;
    gap: 2px;
    width: 65px;
    height: 32px;
    margin-right: 12px;
    border-radius: 4px;
    background-color: #7db9f6;
    color: #fff;
    font-size: 11px;
    font-weight: 600;
}

.btn-more {
    display: flex;
    align-items: center;
    justify-content: center;
    gap: 2px;
    width: 34px;
    height: 34px;
    border: 1px solid #e8eaed;
    border-radius: 4px;
    background-color: #f3f4f6;
}

.btn-more span {
    width: 4px;
    height: 4px;
    border-radius: 50%;
    background-color: #101a30;
}

.editor-body {
    display: flex;
    flex-direction: column;
    gap: 16px;
    padding: 28px 16px 7px 10px;
}

.field {
    display: flex;
    flex-direction: column;
    gap: 9px;
}

.req {
    margin-left: 2px;
    color: #f0303f;
}

.field input[type="text"] {
    height: 32px;
    padding: 0 9px;
    border: 1px solid #e6e8ec;
    border-radius: 4px;
    background-color: #fff;
    font-weight: 300;
}

.field input[readonly] {
    width: 219px;
    background-color: #f4f4f4;
}

.field-check {
    padding-top: 2px;
    gap: 8px;
}

.check {
    display: flex;
    align-items: center;
    gap: 8px;
    height: 16px;
    color: #8c95a3;
    font-weight: 300;
}

.check input {
    display: grid;
    place-items: center;
    width: 16px;
    height: 16px;
    margin: 0;
    border-radius: 3px;
    background-color: #98c3ef;
    appearance: none;
}

.check input::before {
    content: "";
    width: 10px;
    height: 5px;
    margin-bottom: 3px;
    border: solid #fff;
    border-width: 0 0 2px 2px;
    transform: rotate(-45deg);
}

.field-switch {
    padding-top: 6px;
    gap: 11px;
}

.switch {
    display: flex;
    align-items: center;
    justify-content: flex-end;
    width: 35px;
    height: 16px;
    margin: 0;
    padding: 0 3px;
    border-radius: 8px;
    background-color: #0d6efd;
    appearance: none;
}

.switch::before {
    content: "";
    width: 12px;
    height: 12px;
    border-radius: 50%;
    background-color: #fff;
}

.formula {
    padding: 9px 10px;
    border: 2px solid #c6c7c9;
    background-color: #eff6fd;
    font-size: 11px;
    font-weight: 500;
}

.configure {
    display: flex;
    align-items: center;
    align-self: flex-end;
    gap: 4px;
    margin-top: -4px;
    color: #0078f0;
    font-size: 11px;
    font-weight: 600;
}

.hscroll {
    height: 6px;
    margin: 0 11px 1px 3px;
    border-radius: 3px;
    background-color: #c9cacc;
}
```
